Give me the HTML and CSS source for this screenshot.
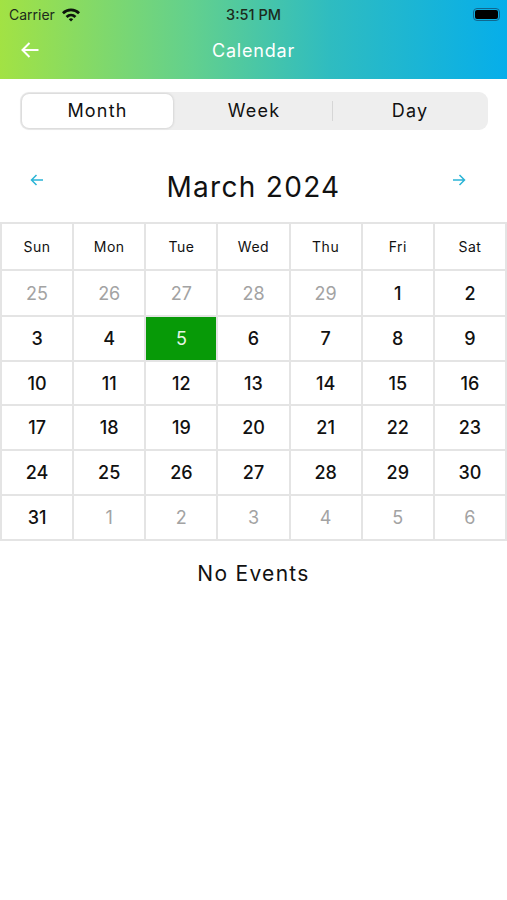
FILE: index.html
```html
<!DOCTYPE html>
<html lang="en">
<head>
    <meta charset="UTF-8">
    <meta name="viewport" content="width=device-width, initial-scale=1.0">
    <title>Calendar</title>
    <link rel="stylesheet" href="styles.css">
</head>
<body>
    <header class="app-header">
        <div class="status-bar">
            <div class="status-left">
                <span>Carrier</span>
                <svg class="wifi" width="20" height="15" viewBox="0 0 20 15">
                    <path d="M1 5.2a13 13 0 0 1 18 0l-1.9 2a10.300 10.300 0 0 0-14.200 0z"/>
                    <path d="M4.600 8.900a8 8 0 0 1 10.800 0l-1.900 2a5.200 5.200 0 0 0-7 0z"/>
                    <path d="M7.800 12.200a3.300 3.300 0 0 1 4.400 0L10 14.500z"/>
                </svg>
            </div>
            <div class="status-time">3:51 PM</div>
            <div class="battery"><span></span></div>
        </div>
        <div class="nav-bar">
            <svg class="back" width="18" height="16" viewBox="0 0 18 16">
                <path d="M17.500 8H1.500M8.500 1L1.500 8l7 7"/>
            </svg>
            <div class="nav-title">Calendar</div>
        </div>
    </header>

    <div class="segments">
        <div class="segment active">Month</div>
        <div class="segment week">Week</div>
        <div class="divider"></div>
        <div class="segment day">Day</div>
    </div>

    <div class="month-row">
        <svg class="month-arrow" width="14" height="12" viewBox="0 0 14 12">
            <path d="M13 6H1.500M6.500 1L1.500 6l5 5"/>
        </svg>
        <div class="month-title">March 2024</div>
        <svg class="month-arrow next" width="14" height="12" viewBox="0 0 14 12">
            <path d="M1 6h11.500M7.500 1l5 5-5 5"/>
        </svg>
    </div>

    <div class="calendar">
        <div class="cell head">Sun</div><div class="cell head">Mon</div><div class="cell head">Tue</div><div class="cell head">Wed</div><div class="cell head">Thu</div><div class="cell head">Fri</div><div class="cell head">Sat</div>

        <div class="cell muted">25</div><div class="cell muted">26</div><div class="cell muted">27</div><div class="cell muted">28</div><div class="cell muted">29</div><div class="cell">1</div><div class="cell">2</div>

        <div class="cell">3</div><div class="cell">4</div><div class="cell today">5</div><div class="cell">6</div><div class="cell">7</div><div class="cell">8</div><div class="cell">9</div>

        <div class="cell">10</div><div class="cell">11</div><div class="cell">12</div><div class="cell">13</div><div class="cell">14</div><div class="cell">15</div><div class="cell">16</div>

        <div class="cell">17</div><div class="cell">18</div><div class="cell">19</div><div class="cell">20</div><div class="cell">21</div><div class="cell">22</div><div class="cell">23</div>

        <div class="cell">24</div><div class="cell">25</div><div class="cell">26</div><div class="cell">27</div><div class="cell">28</div><div class="cell">29</div><div class="cell">30</div>

        <div class="cell">31</div><div class="cell muted">1</div><div class="cell muted">2</div><div class="cell muted">3</div><div class="cell muted">4</div><div class="cell muted">5</div><div class="cell muted">6</div>
    </div>

    <div class="no-events">No Events</div>
</body>
</html>
```

FILE: styles.css
```css
body {
    font-family: "Inter", "Liberation Sans", sans-serif;
    background: #ffffff;
    color: #111111;
    margin: 0;
}

.app-header {
    height: 79px;
    background: linear-gradient(90deg, #a2e244 0%, #62d08e 38%, #2fbcc0 65%, #06aeea 100%);
}

.status-bar {
    height: 28px;
    display: flex;
    align-items: center;
    justify-content: space-between;
    padding: 0 7px 1px 9px;
    font-size: 14px;
    color: #1c2a1c;
    position: relative;
}

.status-left {
    display: flex;
    align-items: center;
    gap: 6px;
}

.wifi {
    fill: #0c140c;
}

.status-time {
    font-size: 14.500px;
    font-weight: 500;
    position: absolute;
    left: 0;
    right: 0;
    text-align: center;
}

.battery {
    width: 27px;
    height: 13px;
    padding: 1px;
    box-sizing: border-box;
    border: 1.500px solid #10678f;
    border-radius: 4px;
}

.battery span {
    display: block;
    height: 100%;
    background: #000000;
    border-radius: 2px;
}

.nav-bar {
    height: 46px;
    display: flex;
    align-items: center;
    padding: 0 0 4px 21px;
    box-sizing: border-box;
    position: relative;
}

.back {
    fill: none;
    stroke: #ffffff;
    stroke-width: 2;
}

.nav-title {
    position: absolute;
    left: 0;
    right: 0;
    text-align: center;
    color: #ffffff;
    font-size: 18px;
    letter-spacing: 0.8px;
}

.segments {
    margin: 13px 19px 0 20px;
    height: 38px;
    padding: 2px;
    box-sizing: border-box;
    background: #eeeeee;
    border-radius: 9px;
    display: flex;
    align-items: center;
}

.segment {
    flex: 1;
    height: 34px;
    line-height: 34px;
    text-align: center;
    font-size: 18px;
    letter-spacing: 1.200px;
}

.segment.active {
    flex: 0 0 151px;
    background: #ffffff;
    border-radius: 7px;
    box-shadow: 0 0 3px rgba(0, 0, 0, 0.2);
}

.segment.week {
    flex: 0 0 159px;
    padding-left: 3px;
    box-sizing: border-box;
}

.segment.day {
    padding-left: 1px;
}

.divider {
    width: 1px;
    height: 20px;
    background: #d6d6d6;
}

.month-row {
    height: 92px;
    display: grid;
    grid-template-columns: 1fr auto 1fr;
    padding: 0 41px 0 30px;
}

.month-arrow {
    fill: none;
    stroke: #2bb4d6;
    stroke-width: 1.500;
    margin-top: 44px;
}

.month-arrow.next {
    justify-self: end;
}

.month-title {
    font-size: 28px;
    line-height: 34px;
    margin: 40px 0 0 11px;
    letter-spacing: 1.300px;
}

.calendar {
    display: grid;
    grid-template-columns: repeat(7, 1fr);
    grid-template-rows: 47px 46px 45px 44px 45px 45px 45px;
    width: 507px;
    border-top: 2px solid #e4e4e4;
    border-left: 2px solid #e4e4e4;
    box-sizing: border-box;
}

.cell {
    display: flex;
    align-items: center;
    justify-content: center;
    border-right: 2px solid #e4e4e4;
    border-bottom: 2px solid #e4e4e4;
    font-size: 18px;
    font-weight: 500;
}

.cell.head {
    font-size: 14px;
    font-weight: 400;
    letter-spacing: 0.5px;
}

.cell.muted {
    color: #a3a3a3;
    font-weight: 400;
}

.cell.today {
    background: #079a07;
    color: #e4f5e4;
    font-weight: 400;
}

.no-events {
    margin-top: 20px;
    text-align: center;
    font-size: 21px;
    letter-spacing: 1.300px;
}
```
